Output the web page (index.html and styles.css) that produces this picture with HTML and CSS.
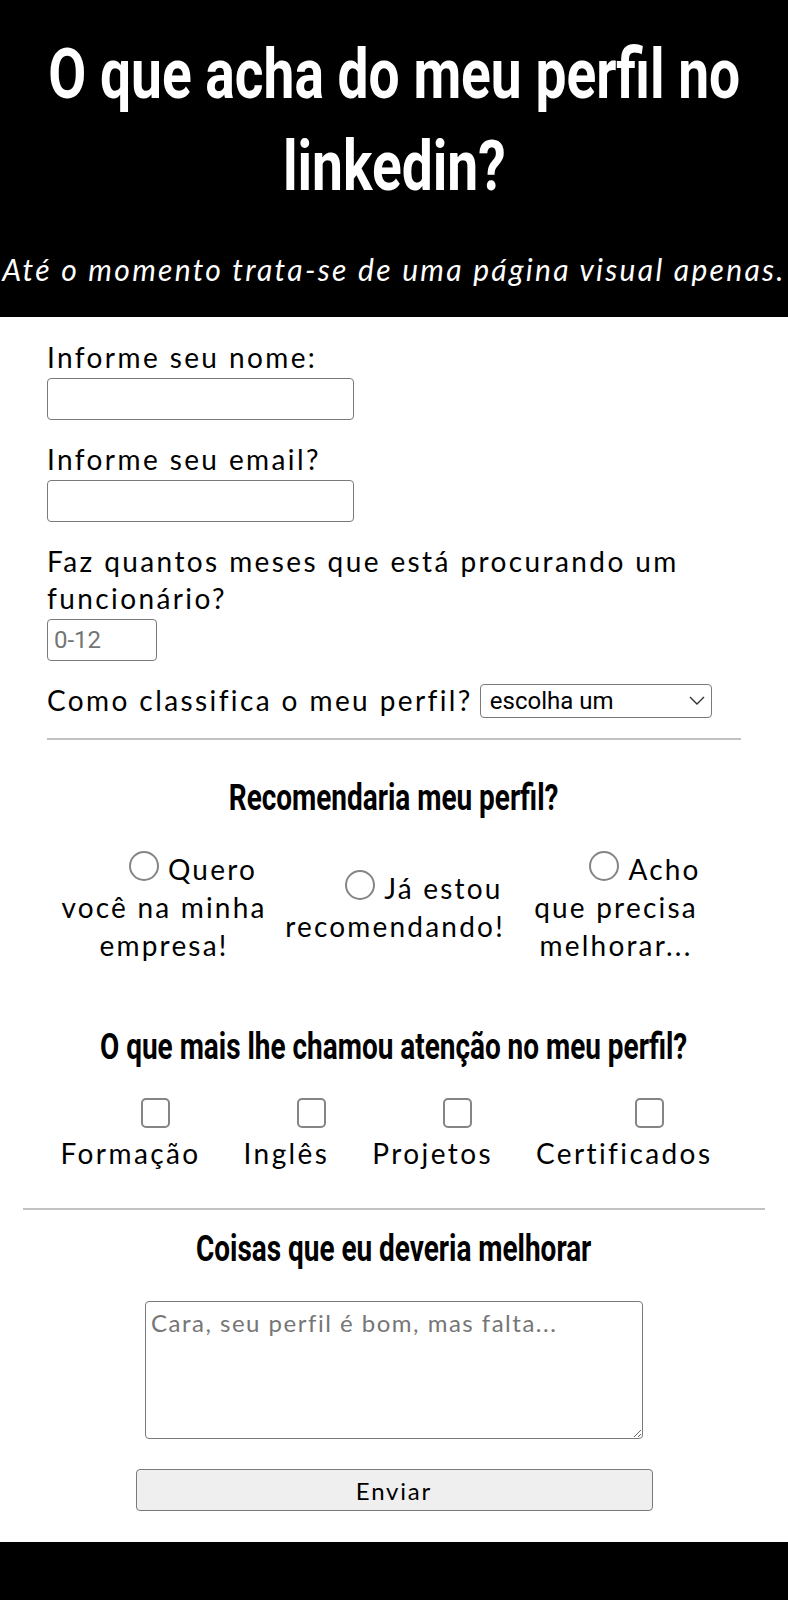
FILE: index.html
```html
<!DOCTYPE html>
<html lang="pt-BR">
<head>
<meta charset="utf-8">
<title>O que acha do meu perfil no linkedin?</title>
<link rel="stylesheet" href="styles.css">
</head>
<body>
<header class="hero">
  <h1 class="hero-title"><span class="narrow">O que acha do meu perfil no linkedin?</span></h1>
  <p class="hero-sub">Até o momento trata-se de uma página visual apenas.</p>
</header>
<main class="page">
  <form class="survey">
    <section class="basics">
      <div class="field">
        <label class="field-label" for="nome">Informe seu nome:</label>
        <input class="text-input" id="nome" type="text">
      </div>
      <div class="field">
        <label class="field-label" for="email">Informe seu email?</label>
        <input class="text-input" id="email" type="email">
      </div>
      <div class="field">
        <label class="field-label" for="meses">Faz quantos meses que está procurando um funcionário?</label>
        <input class="num-input" id="meses" type="number" placeholder="0-12">
      </div>
      <div class="field field-inline">
        <label class="field-label" for="nota">Como classifica o meu perfil?</label>
        <span class="select-wrap">
          <select class="select" id="nota"><option>escolha um</option></select>
          <svg class="select-arrow" width="16" height="9" viewBox="0 0 16 9"><polyline points="1,1 8,8 15,1" fill="none" stroke="#333" stroke-width="1.4"/></svg>
        </span>
      </div>
      <hr class="rule">
      <h2 class="section-title"><span class="narrow">Recomendaria meu perfil?</span></h2>
      <div class="radio-row">
        <label class="radio-item"><input class="radio" type="radio" name="rec">Quero você na minha empresa!</label>
        <label class="radio-item"><input class="radio" type="radio" name="rec">Já estou recomendando!</label>
        <label class="radio-item"><input class="radio" type="radio" name="rec">Acho que precisa melhorar...</label>
      </div>
      <h2 class="section-title section-title-far"><span class="narrow">O que mais lhe chamou atenção no meu perfil?</span></h2>
      <div class="check-row">
        <label class="check-item"><input class="check" type="checkbox"><span>Formação</span></label>
        <label class="check-item"><input class="check" type="checkbox"><span>Inglês</span></label>
        <label class="check-item"><input class="check" type="checkbox"><span>Projetos</span></label>
        <label class="check-item"><input class="check" type="checkbox"><span>Certificados</span></label>
      </div>
    </section>
    <hr class="rule rule-wide">
    <section class="improve">
      <h2 class="section-title section-title-near"><span class="narrow">Coisas que eu deveria melhorar</span></h2>
      <textarea class="notes" placeholder="Cara, seu perfil é bom, mas falta..."></textarea>
      <button class="submit" type="button">Enviar</button>
    </section>
  </form>
</main>
<footer class="footer"></footer>
</body>
</html>
```

FILE: styles.css
```css
* {
  box-sizing: border-box;
}

body {
  margin: 0;
  background: #fff;
  color: #000;
  font-family: "Lato", "Noto Sans", sans-serif;
  font-size: 28px;
}

/* condensed display type: Roboto Bold squeezed horizontally */
.narrow {
  display: block;
  width: 129%;
  margin-left: -14.5%;
  transform: scaleX(0.776);
}

.hero {
  background: #000;
  color: #fff;
  text-align: center;
  padding: 28px 0 29px;
}

.hero-title {
  margin: 0;
  font-family: "Roboto", "Liberation Sans", sans-serif;
  font-weight: 700;
  font-size: 71px;
  line-height: 92px;
}

.hero-sub {
  margin: 39px 0 0;
  font-style: italic;
  font-size: 30px;
  line-height: 37px;
  letter-spacing: 2.3px;
  white-space: nowrap;
}

.page {
  padding: 0 23px;
}

.basics {
  padding: 22px 24px 0;
}

.field {
  margin-bottom: 21px;
}

.field-label {
  display: block;
  line-height: 37px;
  letter-spacing: 2.4px;
}

.text-input {
  display: block;
  margin-top: 2px;
  width: 307px;
  height: 42px;
  border: 1px solid #7a7a7a;
  border-radius: 4px;
  background: #fff;
}

.num-input {
  display: block;
  margin-top: 2px;
  width: 110px;
  height: 42px;
  border: 1px solid #7a7a7a;
  border-radius: 4px;
  padding: 0 6px;
  font-family: "Roboto", sans-serif;
  font-size: 24px;
  -moz-appearance: textfield;
  appearance: textfield;
}

.num-input::-webkit-inner-spin-button,
.num-input::-webkit-outer-spin-button {
  -webkit-appearance: none;
  margin: 0;
}

.num-input::placeholder {
  color: #757575;
}

.field-inline {
  display: flex;
  align-items: center;
  gap: 7px;
  margin-bottom: 19px;
}

.field-inline .field-label {
  display: inline-block;
}

.select-wrap {
  position: relative;
  display: inline-block;
}

.select {
  display: block;
  width: 232px;
  height: 34px;
  padding: 0 30px 0 9px;
  border: 1px solid #7a7a7a;
  border-radius: 4px;
  background: #fff;
  color: #000;
  font-family: "Roboto", sans-serif;
  font-size: 24px;
  -webkit-appearance: none;
  appearance: none;
}

.select-arrow {
  position: absolute;
  right: 7px;
  top: 12px;
  pointer-events: none;
}

.rule {
  margin: 0;
  height: 0;
  border: 0;
  border-top: 2px solid #c2c2c2;
}

.section-title {
  margin: 38px 0 0;
  text-align: center;
  font-family: "Roboto", "Liberation Sans", sans-serif;
  font-weight: 700;
  font-size: 36px;
  line-height: 40px;
}

.section-title-far {
  margin-top: 63px;
}

.section-title-near {
  margin-top: 19px;
}

.radio-row {
  display: grid;
  grid-template-columns: 234px 228px 214px;
  align-items: center;
  margin-top: 32px;
}

.radio-item {
  text-align: center;
  line-height: 38px;
  letter-spacing: 2.2px;
}

.radio {
  -webkit-appearance: none;
  appearance: none;
  display: inline-block;
  width: 30px;
  height: 30px;
  margin: 0 9px 0 58px;
  border: 2px solid #858585;
  border-radius: 50%;
  vertical-align: -1px;
  background: #fff;
}

.check-row {
  display: flex;
  justify-content: center;
  gap: 43px;
  padding-right: 15px;
  margin-top: 31px;
}

.check-item {
  display: flex;
  flex-direction: column;
  align-items: center;
  letter-spacing: 2.4px;
  line-height: 37px;
}

.check {
  -webkit-appearance: none;
  appearance: none;
  display: block;
  width: 29px;
  height: 30px;
  margin: 0 0 7px 50px;
  border: 2px solid #858585;
  border-radius: 5px;
  background: #fff;
}

.rule-wide {
  margin-top: 36px;
}

.improve {
  display: flex;
  flex-direction: column;
  align-items: center;
  padding-bottom: 31px;
}

.notes {
  display: block;
  width: 498px;
  height: 138px;
  margin-top: 32px;
  padding: 6px 5px;
  border: 1px solid #7a7a7a;
  border-radius: 4px;
  font-family: "Lato", "Noto Sans", sans-serif;
  font-size: 24px;
  letter-spacing: 1.5px;
  resize: vertical;
}

.notes::placeholder {
  color: #767676;
}

.submit {
  display: block;
  width: 517px;
  height: 42px;
  margin-top: 30px;
  border: 1px solid #7a7a7a;
  border-radius: 4px;
  background: #efefef;
  color: #000;
  font-family: "Lato", "Noto Sans", sans-serif;
  font-size: 24px;
  letter-spacing: 1.8px;
}

.footer {
  background: #000;
  height: 80px;
}
```
